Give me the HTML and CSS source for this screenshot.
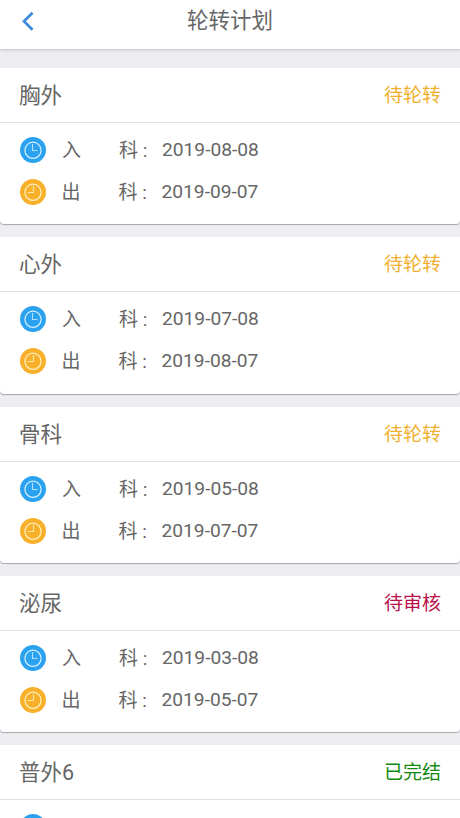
FILE: index.html
```html
<!DOCTYPE html>
<html lang="zh-CN">
<head>
    <meta charset="UTF-8">
    <meta name="viewport" content="width=device-width, initial-scale=1.0">
    <title>轮转计划</title>
    <link rel="stylesheet" href="styles.css">
</head>
<body>

    <!-- Clock icons shared by all cards -->
    <svg class="sprite" width="0" height="0">
        <symbol id="clock-in" viewBox="0 0 26 26">
            <circle cx="13" cy="13" r="13" fill="#2ba2f0"/>
            <circle cx="13" cy="13.3" r="8.1" fill="none" stroke="#d3efff" stroke-width="1.2"/>
            <path d="M12.5 7V13.5H17.5" fill="none" stroke="#b5e0fc" stroke-width="1.1"/>
        </symbol>
        <symbol id="clock-out" viewBox="0 0 26 26">
            <circle cx="13" cy="13" r="13" fill="#f8b02a"/>
            <circle cx="13" cy="13.3" r="8.1" fill="none" stroke="#fff0bf" stroke-width="1.2"/>
            <path d="M13.5 7V13.5H7.5" fill="none" stroke="#ffe8a8" stroke-width="1.1"/>
        </symbol>
    </svg>

    <header class="navbar">
        <a href="#" class="back">
            <svg width="12" height="20" viewBox="0 0 12 20"><path d="M10.5 1.8L2 10.2L10.5 18.8" fill="none" stroke="#3f8bdc" stroke-width="2.7"/></svg>
        </a>
        <h1>轮转计划</h1>
    </header>

    <main class="list">
        <section class="card">
            <div class="card-head"><h2>胸外</h2><span class="status waiting">待轮转</span></div>
            <div class="card-body">
                <div class="row"><svg class="icon"><use href="#clock-in"/></svg><span class="label"><span>入</span><span>科 :</span></span><span class="date">2019-08-08</span></div>
                <div class="row out"><svg class="icon"><use href="#clock-out"/></svg><span class="label"><span>出</span><span>科 :</span></span><span class="date">2019-09-07</span></div>
            </div>
        </section>

        <section class="card">
            <div class="card-head"><h2>心外</h2><span class="status waiting">待轮转</span></div>
            <div class="card-body">
                <div class="row"><svg class="icon"><use href="#clock-in"/></svg><span class="label"><span>入</span><span>科 :</span></span><span class="date">2019-07-08</span></div>
                <div class="row out"><svg class="icon"><use href="#clock-out"/></svg><span class="label"><span>出</span><span>科 :</span></span><span class="date">2019-08-07</span></div>
            </div>
        </section>

        <section class="card">
            <div class="card-head"><h2>骨科</h2><span class="status waiting">待轮转</span></div>
            <div class="card-body">
                <div class="row"><svg class="icon"><use href="#clock-in"/></svg><span class="label"><span>入</span><span>科 :</span></span><span class="date">2019-05-08</span></div>
                <div class="row out"><svg class="icon"><use href="#clock-out"/></svg><span class="label"><span>出</span><span>科 :</span></span><span class="date">2019-07-07</span></div>
            </div>
        </section>

        <section class="card">
            <div class="card-head"><h2>泌尿</h2><span class="status review">待审核</span></div>
            <div class="card-body">
                <div class="row"><svg class="icon"><use href="#clock-in"/></svg><span class="label"><span>入</span><span>科 :</span></span><span class="date">2019-03-08</span></div>
                <div class="row out"><svg class="icon"><use href="#clock-out"/></svg><span class="label"><span>出</span><span>科 :</span></span><span class="date">2019-05-07</span></div>
            </div>
        </section>

        <!-- Last card runs past the bottom of the screen -->
        <section class="card">
            <div class="card-head"><h2>普外6</h2><span class="status done">已完结</span></div>
            <div class="card-body">
                <div class="row"><svg class="icon"><use href="#clock-in"/></svg></div>
            </div>
        </section>
    </main>

</body>
</html>
```

FILE: styles.css
```css
* {
    box-sizing: border-box;
}

body {
    margin: 0;
    height: 100vh;
    overflow: hidden;
    display: flex;
    flex-direction: column;
    background-color: #eeeef2;
    color: #666;
    font-family: Roboto, "Noto Sans CJK SC", sans-serif;
}

h1, h2 {
    margin: 0;
    font-weight: 400;
    font-size: 21.5px;
}

.sprite {
    display: none;
}

.navbar {
    flex: none;
    display: grid;
    grid-template-columns: 60px 1fr 60px;
    height: 49px;
    padding-bottom: 7px;
    align-items: center;
    background-color: #fff;
    box-shadow: 0 1px 3px rgba(0, 0, 0, 0.2);
}

.navbar h1 {
    text-align: center;
    line-height: 40px;
}

.back {
    display: flex;
    padding-left: 22px;
}

.list {
    flex: 1;
    min-height: 0;
    padding-top: 19px;
    overflow: hidden;
}

.card {
    height: 156.3px;
    margin-bottom: 13px;
    background-color: #fff;
    border-radius: 0 0 4px 4px;
    box-shadow: 0 1px 1px rgba(0, 0, 0, 0.3);
}

.card-head {
    display: flex;
    justify-content: space-between;
    align-items: center;
    height: 55px;
    padding: 0 19px 3px;
    border-bottom: 1px solid #e2e2e4;
}

.status {
    font-size: 19px;
}

.waiting {
    color: #f0b02f;
}

.review {
    color: #b8104a;
}

.done {
    color: #128a12;
}

.card-body {
    padding: 6px 20px;
}

.row {
    display: flex;
    align-items: center;
    height: 42px;
    font-size: 19px;
}

.row.out {
    margin-left: -0.5px;
}

.icon {
    width: 26px;
    height: 26px;
}

.label {
    display: flex;
    gap: 38px;
    width: 96px;
    margin-left: 16px;
    padding-bottom: 3px;
}

.date {
    margin-left: 4px;
    padding-bottom: 1px;
    font-size: 19.2px;
}
```
